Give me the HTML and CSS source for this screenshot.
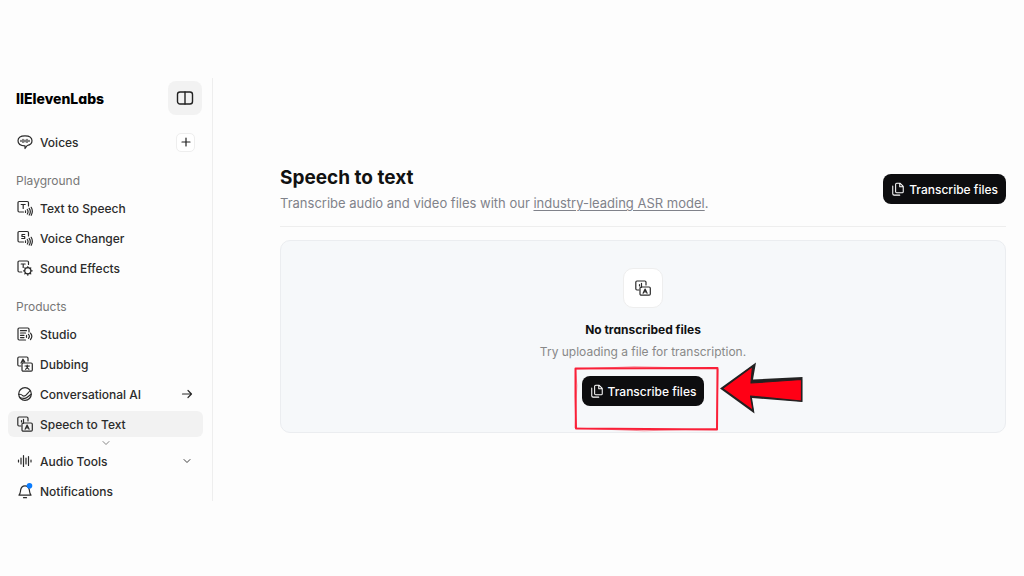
FILE: index.html
```html
<!DOCTYPE html>
<html lang="en">
<head>
    <meta charset="UTF-8">
    <meta name="viewport" content="width=device-width, initial-scale=1.0">
    <title>Speech to text</title>
    <link rel="stylesheet" href="styles.css">
</head>
<body>
    <!-- Shared icon shapes -->
    <svg class="sprite" aria-hidden="true">
        <symbol id="i-transcribe" viewBox="0 0 16 16">
            <path d="M4 10H2A1.200 1.200 0 0 1 .8 8.800V2.200A1.200 1.200 0 0 1 2 1h7.800A1.200 1.200 0 0 1 11 2.200V5M4.500 4.500v1.500M6.500 3.300v4"/>
            <rect x="5" y="7" width="10.300" height="8.200" rx="1.200"/>
            <path d="M8.100 13.200l2-4.200 2 4.200M8.900 11.900h2.500"/>
        </symbol>
        <symbol id="i-files" viewBox="0 0 16 16">
            <path d="M6.500 1.500h4L14 5v6a1.200 1.200 0 0 1-1.200 1.200H6.500A1.200 1.200 0 0 1 5.300 11V2.700a1.200 1.200 0 0 1 1.200-1.200zM10 1.500v4h4M2 4.500v9A1.500 1.500 0 0 0 3.500 15H10"/>
        </symbol>
        <symbol id="i-down" viewBox="0 0 16 16">
            <path d="M4 6l4 4 4-4"/>
        </symbol>
    </svg>

    <div class="layout">
        <aside class="sidebar">
            <div class="brand">
                <a class="logo" href="#">IIElevenLabs</a>
                <button class="toggle" type="button" aria-label="Toggle sidebar">
                    <svg class="icon-lg" viewBox="0 0 18 18"><rect x="1.500" y="3" width="15" height="12" rx="2.500"/><path d="M9 3v12"/></svg>
                </button>
            </div>

            <div class="voices">
                <a class="item" href="#">
                    <svg class="icon" viewBox="0 0 16 16"><path d="M8 1.800c4 0 7 1.600 7 5 0 2.800-2 4.300-4.800 4.700L8 14.500V11.800C3.500 11.800 1 9.800 1 6.800c0-3.400 3-5 7-5zM4 6.300v1.200M6 5.300v3.200M8 6v1.800M10 5.300v3.200M12 6.300v1.200"/></svg>
                    Voices
                </a>
                <button class="add" type="button" aria-label="Add voice">
                    <svg class="icon-sm" viewBox="0 0 12 12"><path d="M6 2v8M2 6h8"/></svg>
                </button>
            </div>

            <h2 class="label">Playground</h2>
            <nav class="menu">
                <a class="item" href="#">
                    <svg class="icon" viewBox="0 0 16 16"><path d="M6.500 12H2.200A1.200 1.200 0 0 1 1 10.800V2.700a1.200 1.200 0 0 1 1.200-1.200h8.100a1.200 1.200 0 0 1 1.200 1.200V6M4.200 4.500h4M6.200 4.500v4M8.500 10.800v1.700M10.300 9.500a4 4 0 0 1 0 4.500M12.200 8.300a6 6 0 0 1 0 6.700M14.200 7.300a8 8 0 0 1 0 8"/></svg>
                    Text to Speech
                </a>
                <a class="item" href="#">
                    <svg class="icon" viewBox="0 0 16 16"><path d="M6.500 12H2.200A1.200 1.200 0 0 1 1 10.800V2.700a1.200 1.200 0 0 1 1.200-1.200h8.100a1.200 1.200 0 0 1 1.200 1.200V6M7.700 4.500H5v2h2.700v2H4.700M8.500 10.800v1.700M10.300 9.500a4 4 0 0 1 0 4.500M12.200 8.300a6 6 0 0 1 0 6.700M14.200 7.300a8 8 0 0 1 0 8"/></svg>
                    Voice Changer
                </a>
                <a class="item" href="#">
                    <svg class="icon" viewBox="0 0 16 16"><path d="M4.800 12H2.200A1.200 1.200 0 0 1 1 10.800V2.200A1.200 1.200 0 0 1 2.200 1h8.100a1.200 1.200 0 0 1 1.200 1.200V4.500M4.200 4h4M6.200 4v3.500"/><circle cx="10.800" cy="10.800" r="3.100"/><path d="M10.800 6.500v1.200M10.800 13.900v1.300M6.500 10.800h1.200M13.900 10.800h1.300M7.800 7.800l.8.800M13 13l.8.800M7.800 13.800l.8-.8M13 8.600l.8-.8"/></svg>
                    Sound Effects
                </a>
            </nav>

            <h2 class="label">Products</h2>
            <nav class="menu">
                <a class="item" href="#">
                    <svg class="icon" viewBox="0 0 16 16"><path d="M8.500 14H2.200A1.200 1.200 0 0 1 1 12.800V3.200A1.200 1.200 0 0 1 2.200 2h8.600A1.200 1.200 0 0 1 12 3.200V6M3.500 4.700h6M3.500 7h5M3.500 9.300h3.500M3.500 11.600h3.500M9.500 9.300v2M11.500 8.300a3 3 0 0 1 0 4M13.500 7.100a5 5 0 0 1 0 6.400"/></svg>
                    Studio
                </a>
                <a class="item" href="#">
                    <svg class="icon" viewBox="0 0 16 16"><path d="M4 10H2A1.200 1.200 0 0 1 .8 8.800V2.200A1.200 1.200 0 0 1 2 1h7.800A1.200 1.200 0 0 1 11 2.200V5M4 7l1.900-3.800L7.800 6M4.700 5.800h2.400"/><rect x="5" y="7" width="10.300" height="8.200" rx="1.200"/><path d="M8 10h4.400M10.200 9v1M8.600 13.300c1.200-.7 2-1.800 2.400-3.200M11.900 13.300c-1.200-.7-2-1.800-2.400-3.200"/></svg>
                    Dubbing
                </a>
                <a class="item" href="#">
                    <svg class="icon" viewBox="0 0 16 16"><circle cx="8" cy="8" r="6.300"/><path d="M1.900 8.500c1.800-.8 2.900.2 4 1.300 2.700 1.900 4.300-2.600 7.300-5.200M3 11.700c2.400.6 3.200 1 5 .6 3-.5 3.600-2.900 6.200-3.900"/></svg>
                    Conversational AI
                    <svg class="icon-sm end" viewBox="0 0 12 12"><path d="M1.500 6h9M7 2.500L10.500 6 7 9.500"/></svg>
                </a>
                <a class="item active" href="#" aria-current="page">
                    <svg class="icon"><use href="#i-transcribe"/></svg>
                    Speech to Text
                </a>
            </nav>

            <div class="more"><svg class="icon-sm"><use href="#i-down"/></svg></div>

            <nav class="menu menu-bottom">
                <a class="item" href="#">
                    <svg class="icon" viewBox="0 0 16 16"><path d="M1.500 7v2M4 5v6M6.500 2.500v11M9 5v6M11.500 3.500v9M14 7v2"/></svg>
                    Audio Tools
                    <svg class="icon-sm end"><use href="#i-down"/></svg>
                </a>
                <a class="item" href="#">
                    <svg class="icon" viewBox="0 0 16 16"><path d="M2 12.200c1.400-1.700 1.300-3 1.600-5C4 4.500 5.500 2.800 8 2.800s4 1.700 4.400 4.400c.3 2 .2 3.300 1.600 5zM6.500 14.700h3"/><circle class="dot" cx="12.500" cy="2.800" r="2.800"/></svg>
                    Notifications
                </a>
            </nav>
        </aside>

        <main class="content">
            <header class="page-header">
                <div>
                    <h1>Speech to text</h1>
                    <p>Transcribe audio and video files with our <a href="#">industry-leading ASR model</a>.</p>
                </div>
                <button class="btn" type="button"><svg class="icon-btn"><use href="#i-files"/></svg>Transcribe files</button>
            </header>

            <section class="empty">
                <div class="tile"><svg class="icon"><use href="#i-transcribe"/></svg></div>
                <h3>No transcribed files</h3>
                <p>Try uploading a file for transcription.</p>
                <div class="callout">
                    <button class="btn" type="button"><svg class="icon-btn"><use href="#i-files"/></svg>Transcribe files</button>
                    <!-- hand-drawn frame and arrow over the button -->
                    <svg class="marker" viewBox="0 0 232 66" aria-hidden="true">
                        <path class="frame" d="M1.500 2.500L143.500 2 143 63.500 2 62.500 1.500 30z"/>
                        <path class="frame thin" d="M2 3L60 .800 143 2.500 144 3 142.800 62.500 70 64.800 1 62 2.800 20z"/>
                        <path class="arrow-shade" d="M146 22.500L182 -3.500 179 13.500 228.500 11 228.500 36 178 32 180.500 47.500z"/>
                        <path class="arrow" d="M148.500 22.500L178.500 .500 177 17 227.500 13.500 227.500 35 176.500 30 179 44.500z"/>
                    </svg>
                </div>
            </section>
        </main>
    </div>
</body>
</html>
```
FILE: styles.css
```css
* {
    box-sizing: border-box;
}
body {
    margin: 0;
    padding-top: 78px;
    font-family: Inter, "Liberation Sans", sans-serif;
    font-size: 13px;
    color: #2b2b2b;
    background: #fdfdfd;
}
h1, h2, h3, p {
    margin: 0;
}
button {
    font: inherit;
    padding: 0;
    border: none;
    cursor: pointer;
}
svg {
    display: block;
    flex: none;
    fill: none;
    stroke: currentColor;
    stroke-width: 1.2;
    stroke-linecap: round;
    stroke-linejoin: round;
}
.sprite {
    display: none;
}
.icon {
    width: 16px;
    height: 16px;
}
.icon-lg {
    width: 18px;
    height: 18px;
    stroke-width: 1.4;
}
.icon-sm {
    width: 12px;
    height: 12px;
}
.icon-btn {
    width: 14px;
    height: 14px;
}
.layout {
    display: flex;
    align-items: flex-start;
}

/* Sidebar */
.sidebar {
    flex: none;
    width: 213px;
    padding: 3px 9px 0 8px;
    border-right: 1px solid #eee;
}
.brand {
    display: flex;
    align-items: center;
    justify-content: space-between;
    padding: 0 1px 0 8px;
    margin-bottom: 14px;
}
.logo {
    font-size: 14px;
    font-weight: 800;
    color: #000;
    text-decoration: none;
    font-feature-settings: "cv11";
}
.toggle {
    display: grid;
    place-items: center;
    width: 34px;
    height: 34px;
    border-radius: 8px;
    color: #222;
    background: #f2f2f2;
}
.voices {
    display: flex;
    align-items: center;
    justify-content: space-between;
    padding-right: 8px;
    margin-bottom: 16px;
}
.add {
    display: grid;
    place-items: center;
    width: 19px;
    height: 19px;
    border: 1px solid #eee;
    border-radius: 5px;
    color: #222;
    background: #fff;
}
.label {
    padding-left: 8px;
    margin-bottom: 4px;
    font-size: 12px;
    font-weight: 400;
    line-height: 20px;
    color: #777;
}
.menu {
    display: flex;
    flex-direction: column;
    gap: 4px;
}
.menu + .label {
    margin-top: 16px;
}
.item {
    display: flex;
    align-items: center;
    gap: 7px;
    height: 26px;
    padding: 0 10px 0 9px;
    border-radius: 6px;
    font-size: 12px;
    font-weight: 500;
    color: #2b2b2b;
    text-decoration: none;
}
.item.active {
    background: #f2f2f2;
}
.end {
    margin-left: auto;
}
.dot {
    fill: #0a7cff;
    stroke: none;
}
.more {
    display: flex;
    justify-content: center;
    height: 14px;
    color: #777;
}
.menu-bottom {
    gap: 10px;
}
.menu-bottom .item {
    height: 20px;
}

/* Main area */
.content {
    flex: 1;
    padding: 86px 18px 0 67px;
}
.page-header {
    display: flex;
    align-items: center;
    justify-content: space-between;
    padding-bottom: 12px;
    border-bottom: 1px solid #eee;
    margin-bottom: 13px;
}
h1 {
    font-size: 19px;
    font-weight: 700;
    line-height: 28px;
    color: #111;
}
.page-header p {
    font-size: 13px;
    line-height: 22px;
    color: #80828a;
}
.page-header a {
    color: inherit;
    text-underline-offset: 2px;
}
.btn {
    display: flex;
    align-items: center;
    gap: 4px;
    height: 30px;
    padding: 0 8px;
    border-radius: 8px;
    font-size: 12px;
    font-weight: 500;
    color: #fff;
    background: #0d0d0f;
}
.empty {
    display: flex;
    flex-direction: column;
    align-items: center;
    padding: 27px 16px 26px;
    border: 1px solid #ebedf0;
    border-radius: 10px;
    background: #f6f8fa;
}
.tile {
    display: grid;
    place-items: center;
    width: 40px;
    height: 40px;
    margin-bottom: 12px;
    border: 1px solid #eee;
    border-radius: 10px;
    background: #fff;
}
.empty h3 {
    font-size: 12px;
    font-weight: 700;
    line-height: 20px;
    color: #111;
    font-feature-settings: "cv11";
}
.empty p {
    margin: 2px 0 14px;
    font-size: 12px;
    line-height: 20px;
    color: #888;
}
.callout {
    position: relative;
}
.marker {
    position: absolute;
    top: -10px;
    left: -8px;
    width: 232px;
    height: 66px;
    overflow: visible;
    pointer-events: none;
}
.frame {
    stroke: #fa2038;
    stroke-width: 2;
}
.thin {
    stroke-width: 1;
    opacity: 0.5;
}
.arrow-shade {
    fill: #222;
    stroke: none;
}
.arrow {
    fill: #ff0015;
    stroke: #222;
}
```
